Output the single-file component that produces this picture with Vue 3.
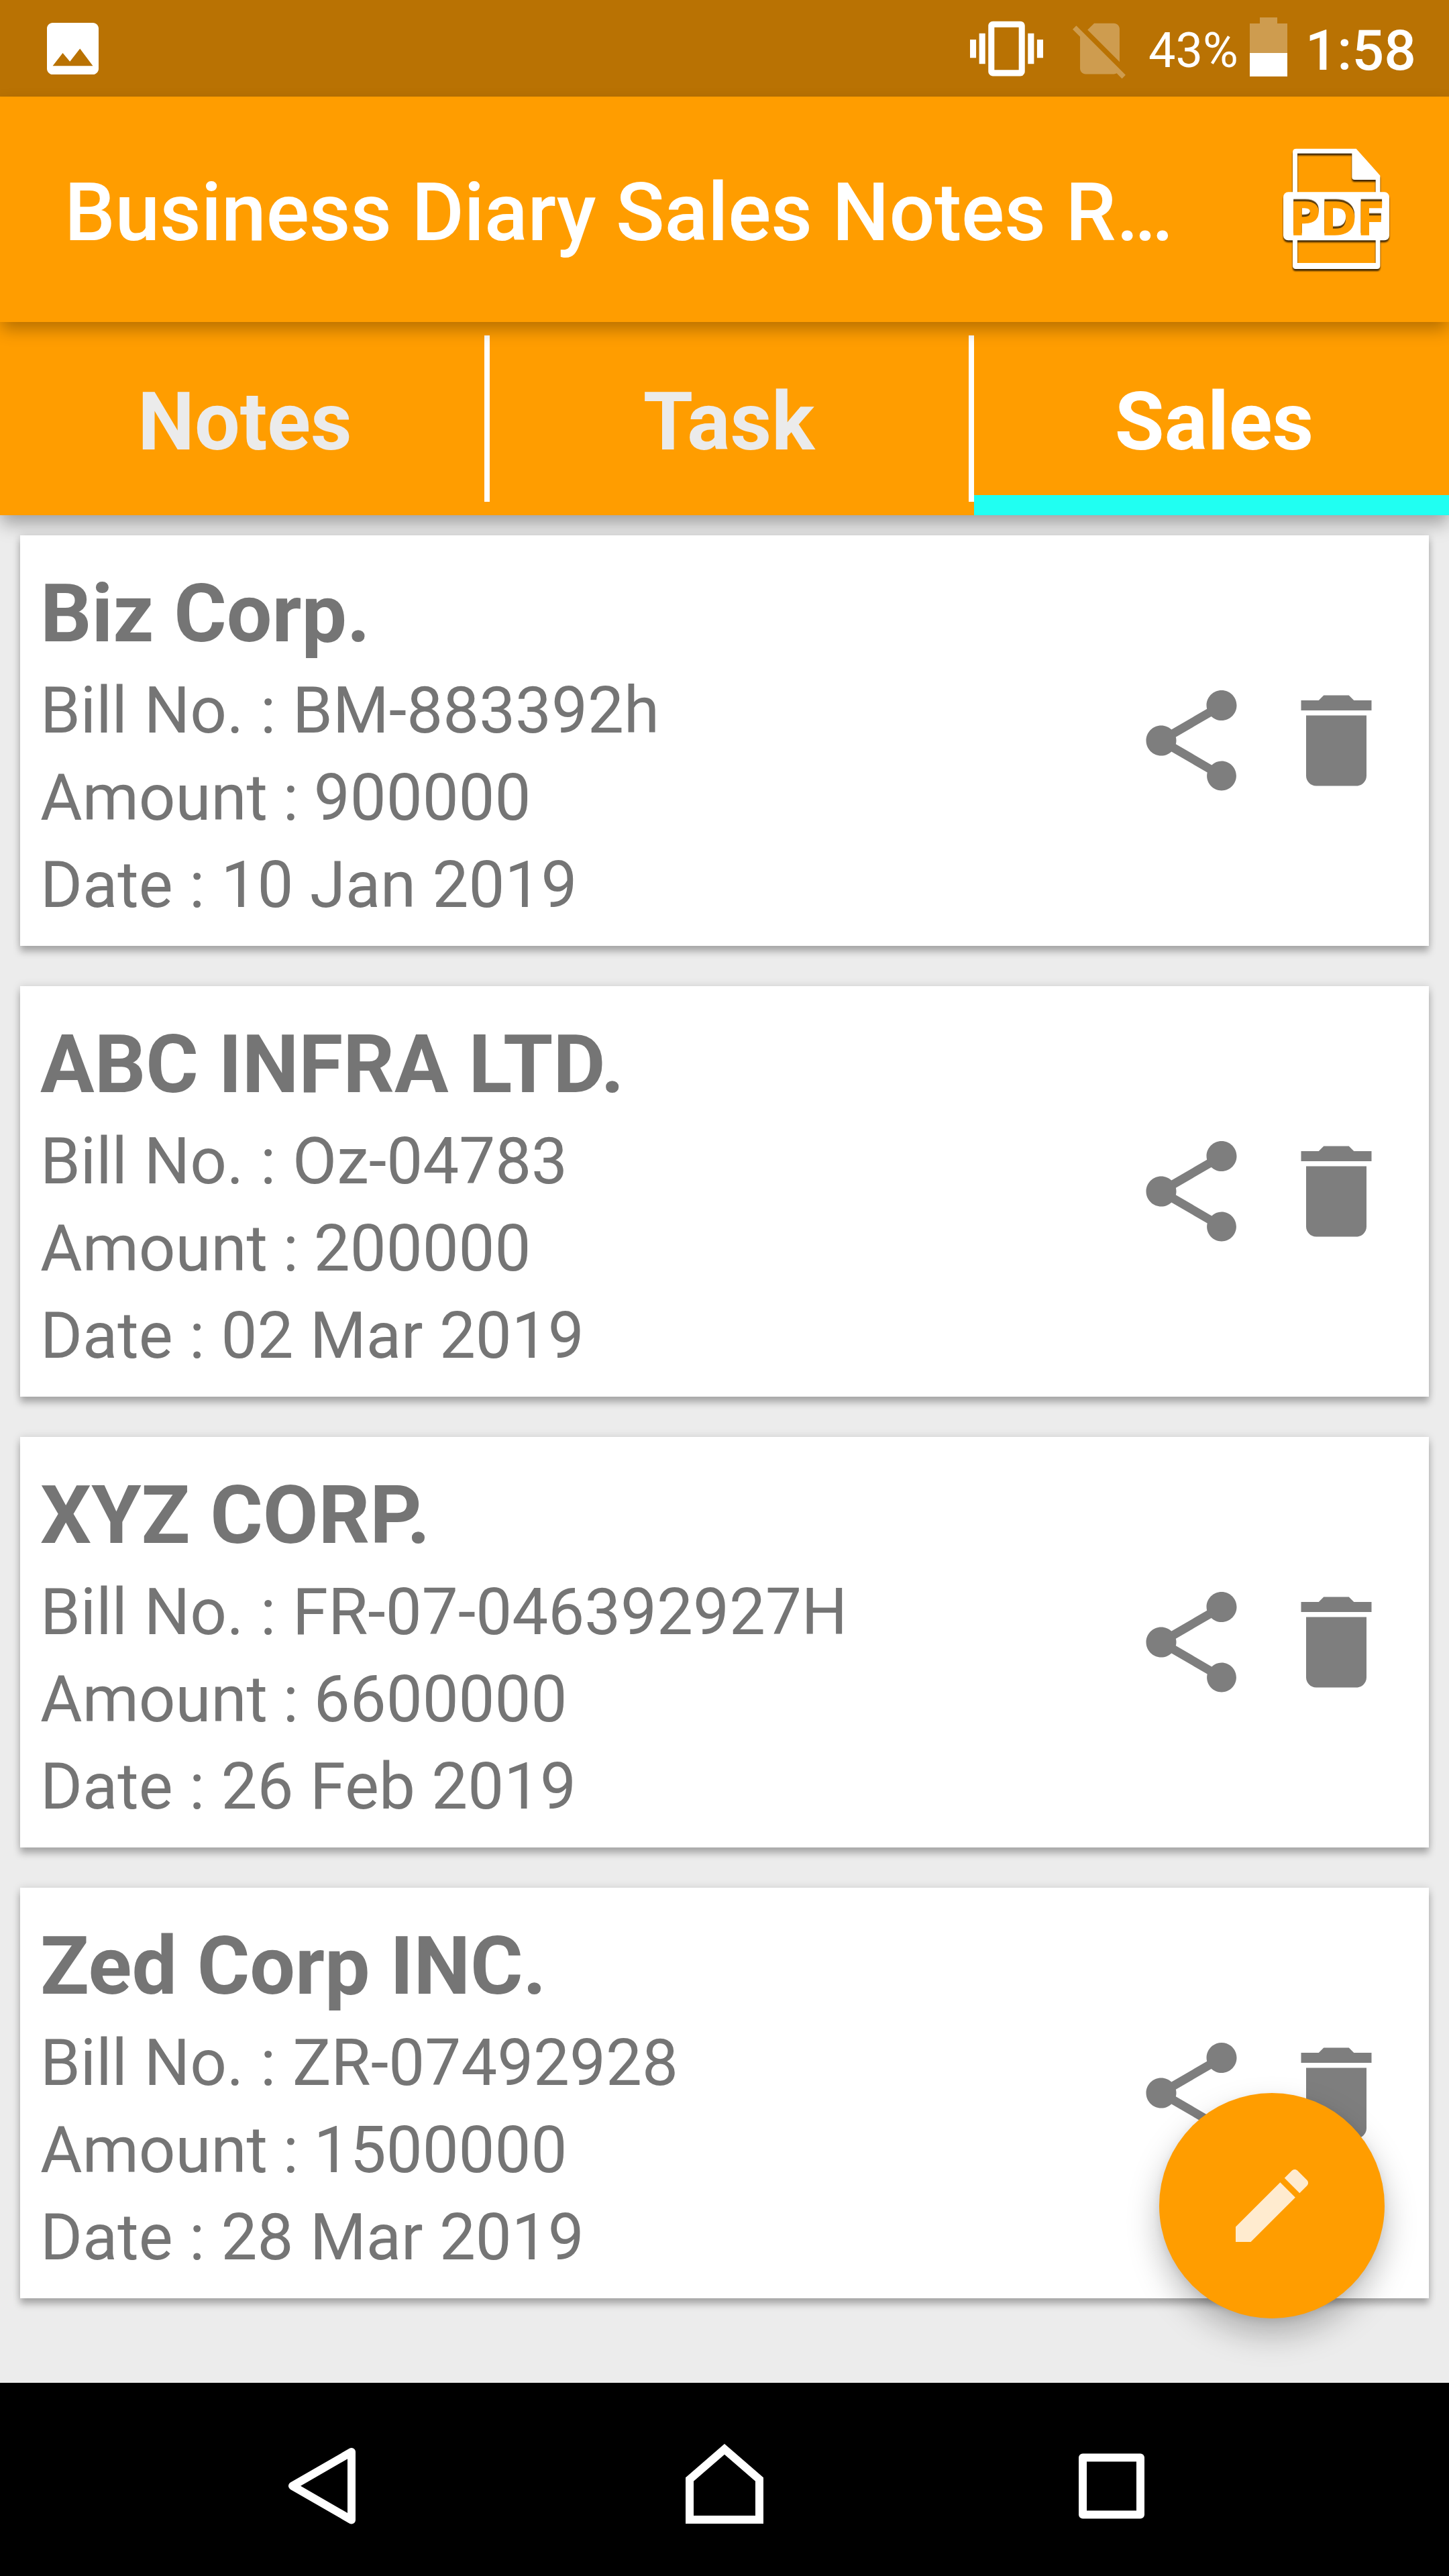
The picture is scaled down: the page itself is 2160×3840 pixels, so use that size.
<template>
  <div class="screen">
    <div class="status-bar">
      <svg class="ic-image" viewBox="3 3 18 18">
        <path d="M21 19V5c0-1.1-.9-2-2-2H5c-1.1 0-2 .9-2 2v14c0 1.1.9 2 2 2h14c1.1 0 2-.9 2-2zM8.5 13.5l2.5 3.01L14.5 12l4.5 6H5l3.5-4.5z" />
      </svg>
      <div class="status-right">
        <svg class="ic-vibrate" viewBox="0 0 24 24">
          <path d="M0 15h2V9H0v6zm3 2h2V7H3v10zm19-8v6h2V9h-2zm-3 8h2V7h-2v10zM16.5 3h-9C6.67 3 6 3.67 6 4.5v15c0 .83.67 1.5 1.5 1.5h9c.83 0 1.5-.67 1.5-1.5v-15c0-.83-.67-1.5-1.5-1.5zM16 19H8V5h8v14z" />
        </svg>
        <svg class="ic-sim" viewBox="0 0 24 24">
          <path d="M18.99 5c0-1.1-.89-2-1.99-2h-7L7.66 5.34 19 16.68 18.99 5zM3.65 3.88L2.38 5.15 5 7.77V19c0 1.1.9 2 2 2h10.01c.35 0 .67-.1.96-.26l1.88 1.88 1.27-1.27L3.65 3.88z" />
        </svg>
        <span class="percent">{{ battery }}%</span>
        <svg class="ic-battery" viewBox="0 0 56 88">
          <path d="M15 0h26v9h15v44H0V9h15z" fill-opacity=".3" />
          <path d="M0 53h56v35H0z" />
        </svg>
        <span class="time">1:58</span>
      </div>
    </div>

    <header class="app-bar">
      <h1>{{ title }}</h1>
      <svg class="ic-pdf" viewBox="210 110 500 570">
        <g class="pdf-doc">
          <path fill-rule="evenodd" d="M280 124H548L655 244V648Q655 662 641 662H278Q264 662 264 648V140Q264 124 280 124ZM285 145V635H635V263H541Q529 263 529 251V145Z" />
          <rect x="222" y="318" width="474" height="216" rx="22" />
        </g>
        <text class="pdf-text" x="250" y="509" textLength="422" lengthAdjust="spacingAndGlyphs">PDF</text>
      </svg>
    </header>

    <nav class="tabs">
      <button
        v-for="tab in tabs"
        :key="tab"
        :class="['tab', { active: tab === currentTab }]"
        @click="currentTab = tab"
      >
        {{ tab }}
      </button>
    </nav>

    <main class="list">
      <article class="card" v-for="sale in sales" :key="sale.bill">
        <div class="info">
          <h2>{{ sale.name }}</h2>
          <p class="bill">Bill No. : {{ sale.bill }}</p>
          <p class="amount">Amount : {{ sale.amount }}</p>
          <p class="date">Date : {{ sale.date }}</p>
        </div>
        <div class="actions">
          <svg viewBox="0 0 24 24">
            <path d="M18 16.08c-.76 0-1.44.3-1.96.77L8.91 12.7c.05-.23.09-.46.09-.7s-.04-.47-.09-.7l7.05-4.11c.54.5 1.25.81 2.04.81 1.66 0 3-1.34 3-3s-1.34-3-3-3-3 1.34-3 3c0 .24.04.47.09.7L8.04 9.81C7.5 9.31 6.79 9 6 9c-1.66 0-3 1.34-3 3s1.34 3 3 3c.79 0 1.5-.31 2.04-.81l7.12 4.16c-.05.21-.08.43-.08.65 0 1.61 1.31 2.92 2.92 2.92 1.61 0 2.92-1.31 2.92-2.92s-1.31-2.92-2.92-2.92z" />
          </svg>
          <svg viewBox="0 0 24 24">
            <path d="M6 19c0 1.1.9 2 2 2h8c1.1 0 2-.9 2-2V7H6v12zM19 4h-3.5l-1-1h-5l-1 1H5v2h14V4z" />
          </svg>
        </div>
      </article>

      <button class="fab">
        <svg viewBox="0 0 24 24">
          <path d="M3 17.25V21h3.75L17.81 9.94l-3.75-3.75L3 17.25zM20.71 7.04c.39-.39.39-1.02 0-1.41l-2.34-2.34c-.39-.39-1.02-.39-1.41 0l-1.83 1.83 3.75 3.75 1.83-1.83z" />
        </svg>
      </button>
    </main>

    <footer class="nav-bar">
      <svg viewBox="0 0 144 144">
        <path d="M28 81.7L116 31V132.5z" stroke-linejoin="round" />
      </svg>
      <svg viewBox="0 0 144 144">
        <path d="M32 72L84 27L136 72V132H32z" />
      </svg>
      <svg viewBox="0 0 144 144">
        <rect x="30" y="39.5" width="86" height="85" stroke-linejoin="round" />
      </svg>
    </footer>
  </div>
</template>

<script setup>
import { ref } from 'vue'

const title = 'Business Diary Sales Notes R…'
const battery = ref(43)

const tabs = ['Notes', 'Task', 'Sales']
const currentTab = ref('Sales')

const sales = ref([
  { name: 'Biz Corp.', bill: 'BM-883392h', amount: 900000, date: '10 Jan 2019' },
  { name: 'ABC INFRA LTD.', bill: 'Oz-04783', amount: 200000, date: '02 Mar 2019' },
  { name: 'XYZ CORP.', bill: 'FR-07-046392927H', amount: 6600000, date: '26 Feb 2019' },
  { name: 'Zed Corp INC.', bill: 'ZR-07492928', amount: 1500000, date: '28 Mar 2019' }
])
</script>

<style>
body {
  margin: 0;
}
</style>

<style scoped>
.screen {
  width: 2160px;
  height: 3840px;
  display: flex;
  flex-direction: column;
  overflow: hidden;
  background: #ececec;
  font-family: Roboto, sans-serif;
}

svg {
  display: block;
  flex: none;
}

button {
  border: none;
  padding: 0;
  font-family: inherit;
}

/* status bar */
.status-bar {
  height: 144px;
  flex: none;
  box-sizing: border-box;
  padding: 0 49px 0 70px;
  display: flex;
  align-items: center;
  justify-content: space-between;
  background: #b97203;
  color: #fff;
  fill: #fff;
}

.ic-image {
  width: 77px;
  height: 77px;
}

.status-right {
  display: flex;
  align-items: center;
}

.ic-vibrate {
  width: 109px;
  height: 109px;
}

.ic-sim {
  width: 101px;
  height: 101px;
  margin-left: 34px;
  fill-opacity: .3;
}

.percent {
  margin-left: 22px;
  padding-top: 7px;
  font-size: 72px;
}

.ic-battery {
  width: 56px;
  height: 88px;
  margin: 0 27px 4px 17px;
}

.time {
  padding-top: 7px;
  font-size: 84px;
  font-weight: 500;
}

/* app bar */
.app-bar {
  height: 336px;
  flex: none;
  box-sizing: border-box;
  padding: 0 84px 0 96px;
  display: flex;
  align-items: center;
  justify-content: space-between;
  position: relative;
  z-index: 3;
  background: #ff9d00;
  box-shadow: 0 12px 24px -2px rgba(0, 0, 0, .3);
}

h1 {
  margin: 0;
  padding-top: 10px;
  white-space: nowrap;
  font-size: 120px;
  font-weight: 500;
  letter-spacing: -.2px;
  color: #fff;
}

.ic-pdf {
  width: 166.7px;
  height: 190px;
}

.pdf-doc {
  fill: #fff;
  filter: drop-shadow(0 9px 3px rgba(0, 0, 0, .75));
}

.pdf-text {
  font-family: "Open Sans", sans-serif;
  font-size: 204px;
  font-weight: 700;
  fill: #ff9d00;
  stroke: #ff9d00;
  stroke-width: 4;
  filter: drop-shadow(0 -10px 1px #5c3d0c);
}

/* tabs */
.tabs {
  height: 288px;
  flex: none;
  display: grid;
  grid-template-columns: 730px 722px 708px;
  background: #ff9d00;
  box-shadow: 0 12px 24px -2px rgba(0, 0, 0, .28), 0 16px 32px rgba(0, 0, 0, .08);
}

.tab {
  position: relative;
  padding-top: 10px;
  background: none;
  font-size: 120px;
  font-weight: 700;
  color: #ebebeb;
}

.tab:nth-child(2) {
  padding-right: 9px;
}

.tab:nth-child(3) {
  padding-left: 8px;
}

.tab:not(:last-child)::after {
  content: '';
  position: absolute;
  top: 20px;
  bottom: 20px;
  right: 0;
  width: 8px;
  background: #fff;
}

.tab.active {
  color: #fff;
  box-shadow: inset 0 -30px #20fff2;
}

/* sales list, the cards lie over the shadow of the tabs */
.list {
  flex: 1;
  padding: 30px 30px 0;
  display: flex;
  flex-direction: column;
  gap: 60px;
  position: relative;
}

.card {
  height: 612px;
  flex: none;
  box-sizing: border-box;
  padding: 47px 48px 0 30px;
  display: flex;
  justify-content: space-between;
  background: #fff;
  color: #757575;
  box-shadow: 0 9px 10px rgba(0, 0, 0, .25), 0 0 12px rgba(0, 0, 0, .13);
}

h2 {
  margin: 0 0 9px;
  font-size: 120px;
  line-height: 140px;
  font-weight: 700;
}

p {
  margin: 0;
  font-size: 96px;
  line-height: 130px;
}

.bill {
  word-spacing: 1px;
}

.amount {
  word-spacing: -1px;
}

.date {
  word-spacing: .6px;
}

.actions {
  display: flex;
  align-items: center;
  gap: 36px;
  margin-top: -47px;
  fill: #7e7e7e;
}

.actions svg {
  width: 180px;
  height: 180px;
}

/* floating edit button */
.fab {
  position: absolute;
  right: 96px;
  bottom: 96px;
  width: 336px;
  height: 336px;
  display: flex;
  align-items: center;
  justify-content: center;
  border-radius: 50%;
  background: #ff9d00;
  box-shadow: 0 24px 48px rgba(0, 0, 0, .26), 0 4px 12px rgba(0, 0, 0, .08);
}

.fab svg {
  width: 144px;
  height: 144px;
  fill: #ffebcf;
}

/* system navigation */
.nav-bar {
  height: 288px;
  flex: none;
  box-sizing: border-box;
  padding-left: 408px;
  display: flex;
  align-items: center;
  gap: 444px;
  position: relative;
  background: #000;
}

.nav-bar svg {
  width: 144px;
  height: 144px;
  fill: none;
  stroke: #fff;
  stroke-width: 12;
}
</style>
